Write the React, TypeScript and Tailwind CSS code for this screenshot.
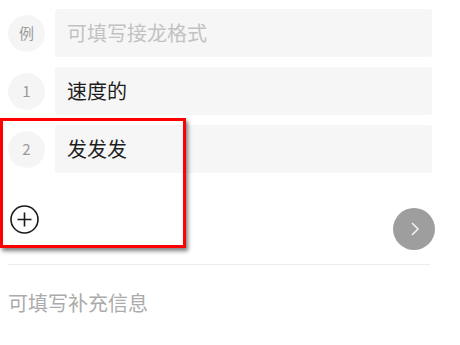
import React from 'react'

const rows = [
  { label: '例', text: '可填写接龙格式', placeholder: true },
  { label: '1', text: '速度的', placeholder: false },
  { label: '2', text: '发发发', placeholder: false },
]

export default function App() {
  return (
    <div
      className="relative w-[460px] h-[345px] bg-white overflow-hidden"
      style={{ fontFamily: '"Noto Sans CJK SC", "Noto Sans", sans-serif' }}
    >
      {/* 接龙列表 */}
      <div className="pt-[9px] pl-2 pr-[28px] flex flex-col gap-[10px]">
        {rows.map((row) => (
          <div key={row.label} className="flex items-center gap-[10px]">
            <div className="w-[37px] h-[37px] rounded-full bg-[#f5f5f5] flex items-center justify-center text-[15px] text-[#9a9a9a]">
              {row.label}
            </div>
            <div className="flex-1 h-12 rounded-[3px] bg-[#f6f6f6] flex items-center pl-3">
              <span
                className={`text-[20px] leading-7 ${
                  row.placeholder ? 'text-[#c2c2c2]' : 'text-[#1e1e1e]'
                }`}
              >
                {row.text}
              </span>
            </div>
          </div>
        ))}
      </div>

      {/* 添加 + 下一步 */}
      <div className="mt-8 pl-[10px] pr-[25px] flex justify-between items-start">
        <svg width="29" height="29" viewBox="0 0 29 29" fill="none">
          <circle cx="14.5" cy="14.5" r="13.5" stroke="#1a1a1a" strokeWidth="1.6" />
          <path d="M14.5 7.5v14M7.5 14.5h14" stroke="#1a1a1a" strokeWidth="1.6" />
        </svg>
        <button className="mt-[3px] w-[42px] h-[42px] rounded-full bg-[#9e9e9e] flex items-center justify-center">
          <svg width="10" height="16" viewBox="0 0 10 16" fill="none" className="ml-[2px]">
            <path d="M2 2l6 6-6 6" stroke="#f2f2f2" strokeWidth="1.6" />
          </svg>
        </button>
      </div>

      <div className="mt-[14px] ml-2 mr-[30px] h-px bg-[#ededed]" />

      <div className="mt-6 pl-2 text-[20px] leading-7 text-[#ababab]">可填写补充信息</div>

      {/* 标注框 */}
      <div className="absolute left-0 top-[118px] w-[186px] h-[130px] border-[3px] border-[#ff0000] shadow-[2px_3px_4px_rgba(0,0,0,0.5)]" />
    </div>
  )
}
